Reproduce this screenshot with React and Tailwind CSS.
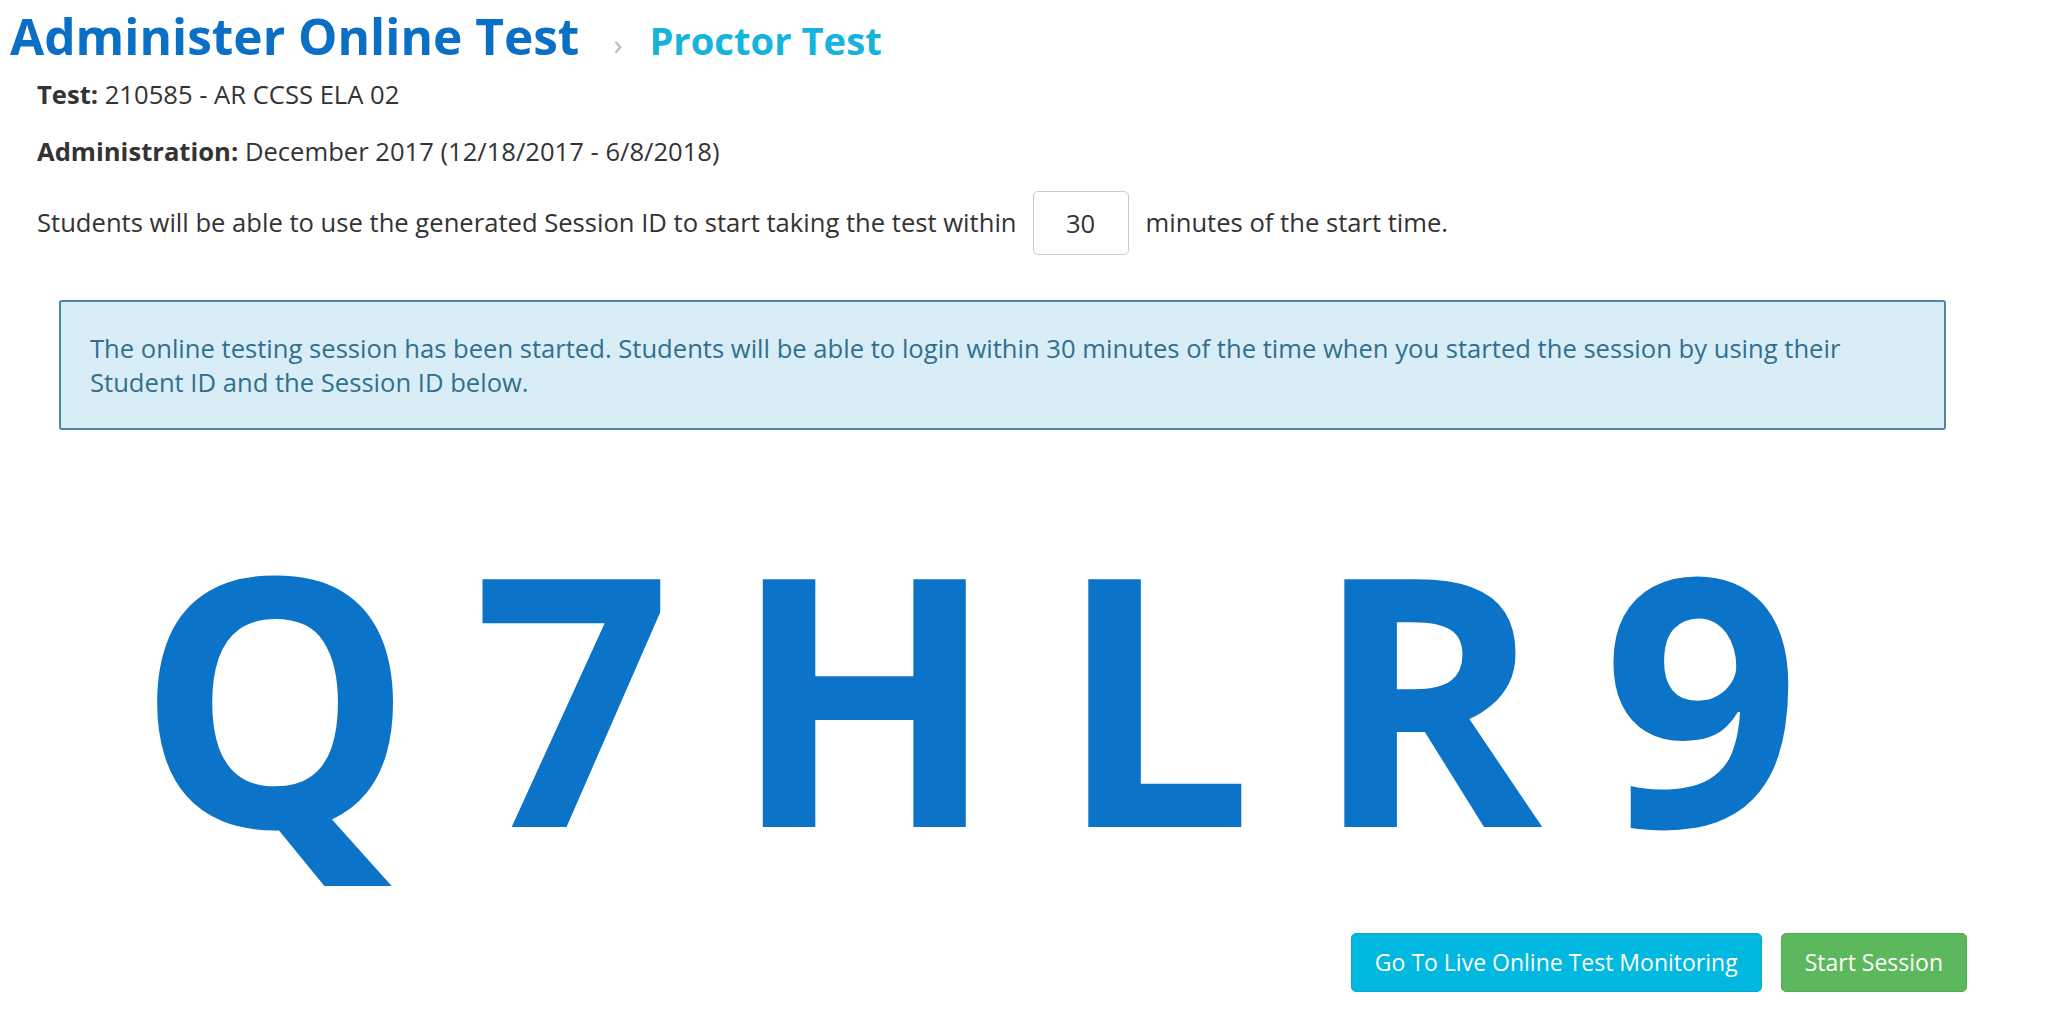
import React from 'react';

const code = ['Q', '7', 'H', 'L', 'R', '9'];

export default function App() {
  return (
    <div className="min-h-screen bg-white text-[#333] font-['Open_Sans',sans-serif]">
      {/* Header */}
      <div className="flex items-baseline pl-[10px] pt-[6px]">
        <h1 className="text-[49.6px] font-bold leading-[60px] text-[#0b6fc6]">Administer Online Test</h1>
        <span className="ml-[34px] text-[30px] text-[#bbb]">›</span>
        <h2 className="ml-[27px] text-[38.2px] font-bold leading-[60px] text-[#14b4dc]">Proctor Test</h2>
      </div>

      <div className="pl-[37px] text-[25.6px] leading-[34px]">
        <p className="mt-[8px]">
          <span className="font-bold">Test:</span> 210585 - AR CCSS ELA 02
        </p>
        <p className="mt-[23px]">
          <span className="font-bold">Administration:</span> December 2017 (12/18/2017 - 6/8/2018)
        </p>
        <div className="mt-[22px] flex items-center">
          <span>Students will be able to use the generated Session ID to start taking the test within</span>
          <input
            readOnly
            value="30"
            className="ml-[16px] mr-[17px] h-[64px] w-[96px] rounded-[5px] border border-[#ccc] text-center text-[25.6px] text-[#333] outline-none"
          />
          <span>minutes of the start time.</span>
        </div>
      </div>

      {/* Alert */}
      <div className="ml-[59px] mt-[45px] w-[1887px] rounded-[3px] border-2 border-[#4f86a8] bg-[#d9edf7] px-[29px] pb-[28px] pt-[30px] text-[25.6px] leading-[34px] text-[#31708f]">
        The online testing session has been started. Students will be able to login within 30 minutes of the time when you started the session by using their Student ID and the Session ID below.
      </div>

      {/* Session ID */}
      <div className="ml-[137px] mt-[83px] flex gap-[60px] text-[347px] font-bold leading-[360px] text-[#0b73c8]">
        {code.map((c) => (
          <span key={c}>{c}</span>
        ))}
      </div>

      {/* Actions */}
      <div className="mt-[60px] flex justify-end gap-[19px] pr-[81px]">
        <button className="h-[59px] rounded-[5px] border border-[#0aa8cc] bg-[#00b8e0] px-[23px] text-[23px] text-white">
          Go To Live Online Test Monitoring
        </button>
        <button className="h-[59px] rounded-[5px] border border-[#4cae4c] bg-[#5cb85c] px-[23px] text-[23px] text-white">
          Start Session
        </button>
      </div>
    </div>
  );
}
